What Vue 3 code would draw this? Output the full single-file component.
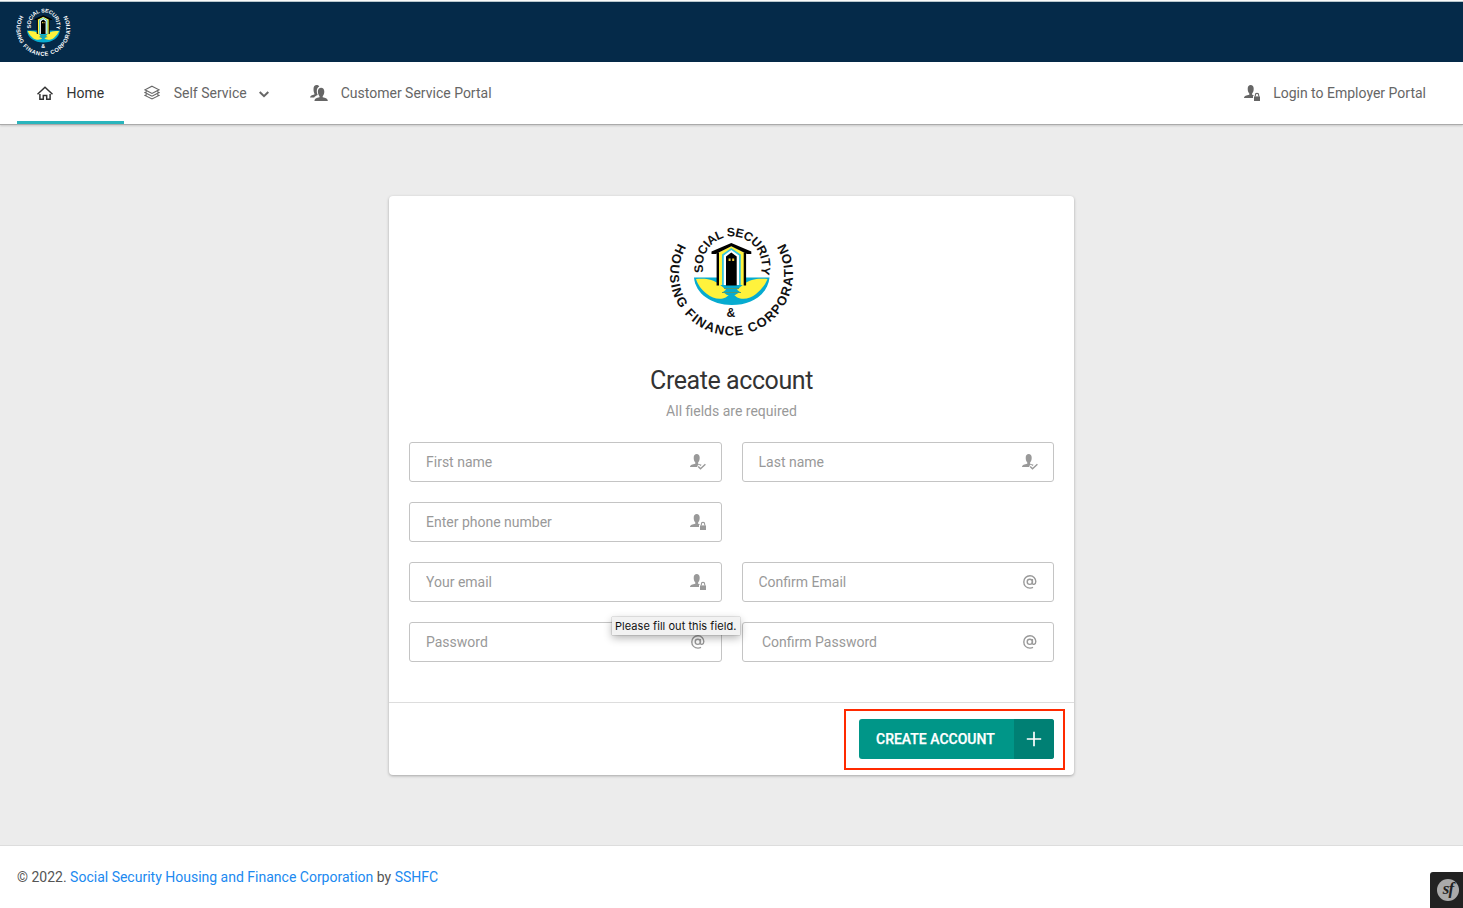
<script setup>
import { h } from 'vue'

const fields = [
  { id: 'first', label: 'First name', icon: 'check' },
  { id: 'last', label: 'Last name', icon: 'check' },
  { id: 'phone', label: 'Enter phone number', icon: 'lock', wide: true },
  { id: 'email', label: 'Your email', icon: 'lock' },
  { id: 'email2', label: 'Confirm Email', icon: 'at' },
  { id: 'pass', label: 'Password', icon: 'at' },
  { id: 'pass2', label: 'Confirm Password', icon: 'at', indent: true },
]

const bust = 'M0 13.1C0 11 2.6 10.2 5.3 9.7V8.4C4.2 7.4 3.7 5.7 3.7 3.7C3.7 1.2 4.9 0 6.7 0S9.7 1.2 9.7 3.7C9.7 5.7 9.2 7.4 8.1 8.4V9.7'

const UserIcon = (props) =>
  h('svg', { viewBox: '0 0 16 16', width: 16, height: 16 },
    props.kind === 'check'
      ? [
          h('path', { fill: 'currentColor', d: bust + 'L11.6 10.7L10.6 12L8.8 10.5L7 12.2L7.8 13.1Z' }),
          h('path', { fill: 'none', stroke: 'currentColor', 'stroke-width': 1.4, d: 'M8.2 12.4L10.5 14.7L15.4 10.2' }),
        ]
      : [
          h('path', { fill: 'currentColor', d: bust + 'L10 10.2L9 11V13.1Z' }),
          h('path', { fill: 'currentColor', d: 'M10 11.4H16V16H10Z' }),
          h('path', { fill: 'none', stroke: 'currentColor', 'stroke-width': 1.1, d: 'M11.3 11.6V10.2A1.7 1.8 0 0 1 14.7 10.2V11.6' }),
        ])
UserIcon.props = ['kind']

const Logo = (props) => {
  const arc = (id, d) => h('path', { id: id + props.uid, d, fill: 'none' })
  const ring = (id, size, len, text) =>
    h('text', { 'font-family': 'Liberation Sans, Arial, sans-serif', 'font-weight': 700, 'font-size': size, fill: 'currentColor', textLength: len },
      [h('textPath', { href: '#' + id + props.uid, textLength: len }, text)])
  return h('svg', { viewBox: '0 0 145 130' }, [
    arc('outer', 'M18.2 28.2A61.5 61.5 0 1 0 124.8 28.2'),
    arc('inner', 'M43.5 57.5A29.5 29.5 0 1 1 101 57.5'),
    ring('outer', 13, 257, 'HOUSING FINANCE CORPORATION'),
    ring('inner', 12.3, 107.5, 'SOCIAL SECURITY'),
    h('path', { fill: '#06abd0', d: 'M34 62.6H109.5C108 79 92 90 71.7 90S35.5 79 34 62.6Z' }),
    h('path', { fill: '#fff23c', d: 'M36 64C45 63 53 64 59 69L70 78C66 86 54 85 47 79C41 74 38 70 36 64ZM107.5 64C98 63 90 64 84 69L73 78C77 86 89 85 96 79C102 74 105 70 107.5 64Z' }),
    h('path', { fill: '#fff23c', d: 'M58 38L71.3 31L85 38V70H58Z' }),
    h('path', { fill: '#38c6de', d: 'M62 70V39.5L71.3 33L80.8 39.5V70Z' }),
    h('path', { fill: '#fff', d: 'M63.8 70V40.5L71.3 35L79 40.5V70Z' }),
    h('path', { fill: '#000', d: 'M66 70.5V41.5L71.3 37.5L76.7 41.5V70.5ZM56.6 37.5H59V70.5H56.6ZM83.7 37.5H86.1V70.5H83.7Z' }),
    h('path', { fill: '#000', d: 'M51.5 36.5L71.3 28L91.3 36.5V39H87L71.3 31.2L55.8 39H51.5Z' }),
    h('path', { fill: '#f1cc41', d: 'M68.6 43.5H70.6V46H68.6ZM72.2 43.5H74.2V46H72.2Z' }),
    h('path', { fill: '#06abd0', d: 'M65 71H79L76 74L80 77L75 80H67L63 77L67 74Z' }),
    h('path', { fill: '#4f9b72', d: 'M64 73H79V74H64ZM62 77H81V78H62Z' }),
    h('text', { x: 71, y: 101.6, 'text-anchor': 'middle', 'font-family': 'Liberation Sans, Arial, sans-serif', 'font-weight': 700, 'font-size': 12.2, fill: 'currentColor' }, '&'),
  ])
}
Logo.props = ['uid']
</script>

<template>
  <div class="page">
    <header class="topbar"><Logo uid="a" class="brand" /></header>
    <nav class="nav">
      <a class="item active">
        <svg width="16" height="16" viewBox="0 0 16 16" fill="none" stroke="currentColor" stroke-width="1.5"><path d="M.5 9.2L8 2.2L15.5 9.2" /><path d="M2.9 9V14.3H6.3V10.6H9.7V14.3H13.1V9" /></svg>
        <span>Home</span>
      </a>
      <a class="item">
        <svg width="16" height="16" viewBox="0 0 16 16" fill="none" stroke="currentColor" stroke-width="1.1"><path d="M8 1.2L15 4.8L8 8.4L1 4.8Z" /><path d="M2.8 6.6L1 7.6L8 11.2L15 7.6L13.2 6.6M2.8 9.4L1 10.4L8 14L15 10.4L13.2 9.4" /></svg>
        <span>Self Service</span>
        <svg class="caret" width="10" height="7" viewBox="0 0 10 7" fill="none" stroke="currentColor" stroke-width="2"><path d="M.7 1L5 5.2L9.3 1" /></svg>
      </a>
      <a class="item">
        <svg class="group" width="18" height="16" viewBox="0 0 18 16" fill="currentColor"><path d="M0 12.6C0 10.8 2 10 4.4 9.5V8.6C3.9 7.6 3.5 6 3.5 4C3.5 1.4 4.7 0 6.7 0C7.9 0 8.8.5 9.3 1.5C7.6 2.3 6.8 3.7 6.8 6C6.8 7.7 7.2 9 7.8 10C5.8 10.7 4.7 11.6 4.2 12.6Z" /><path d="M4.5 16C4.5 13.6 6.8 12.8 9.5 12.3V11.2C8.6 10.2 7.9 8.6 7.9 6.6C7.9 4.1 9.1 2.8 11.1 2.8S14.3 4.1 14.3 6.6C14.3 8.6 13.6 10.2 12.7 11.2V12.3C15.4 12.8 17.8 13.6 17.8 16Z" /></svg>
        <span>Customer Service Portal</span>
      </a>
      <a class="item login"><UserIcon kind="lock" /><span>Login to Employer Portal</span></a>
    </nav>

    <main class="content">
      <form class="card">
        <div class="body">
          <Logo uid="b" class="emblem" />
          <h1>Create account</h1>
          <p class="hint">All fields are required</p>
          <div class="grid">
            <div v-for="f in fields" :key="f.id" class="cell" :class="{ wide: f.wide }">
              <div class="field">
                <input :class="{ indent: f.indent }" :placeholder="f.label" />
                <svg v-if="f.icon === 'at'" class="at" width="14" height="14" viewBox="0 0 14 14" fill="none" stroke="currentColor" stroke-width="1.4"><circle cx="6.8" cy="6.8" r="2.6" /><path d="M9.4 4V8C9.4 10.2 12.8 9.8 12.8 6.6C12.8 3.2 10.2.8 7 .8C3.4.8.8 3.5.8 7S3.4 13.1 7 13.1C8.2 13.1 9 12.9 10 12.4" /></svg>
                <UserIcon v-else :kind="f.icon" />
              </div>
            </div>
          </div>
          <div class="tooltip">Please fill out this field.</div>
        </div>
        <div class="actions">
          <button type="button">
            <span class="label">CREATE ACCOUNT</span>
            <span class="plus"><svg width="16" height="16" viewBox="0 0 16 16" stroke="#fff" stroke-width="1.7"><path d="M.8 8H15.2M8 .8V15.2" /></svg></span>
          </button>
          <div class="highlight"></div>
        </div>
      </form>
    </main>

    <footer class="footer">
      <span>© 2022. <a>Social Security Housing and Finance Corporation</a> by <a>SSHFC</a></span>
    </footer>
    <div class="toolbar"><span class="badge">sf</span></div>
  </div>
</template>

<style>
body { margin: 0; overflow: hidden; }
</style>

<style scoped>
.page { position: relative; display: flex; flex-direction: column; height: 908px; box-sizing: border-box; border-top: 1px solid #fafafa; background: #ececec; font-family: Roboto, sans-serif; font-size: 14px; line-height: 20px; color: #333; overflow: hidden; }
.topbar { height: 61px; box-sizing: border-box; border-top: 1px solid #b9c6cc; background: #052a49; color: #fff; flex: none; }
.brand { display: block; width: 63.5px; height: 57px; margin: 1px 0 0 12px; }
.nav { height: 62px; flex: none; display: flex; padding: 0 17px; background: #fff; border-bottom: 1px solid #aaa; box-shadow: 0 1px 2px rgba(0,0,0,.15); color: #666; }
.item { display: flex; align-items: center; box-sizing: border-box; padding: 3px 20px 3px; height: 62px; }
.item svg { margin-right: 13.5px; flex: none; }
.item.active { color: #333; border-bottom: 3px solid #2ab5bd; padding-bottom: 0; }
.item .caret { margin: 2px 1px 0 12px; }
.item .group { margin-right: 13px; }
.login { margin-left: auto; }
.caret { margin-right: 1px; }
.content { flex: 1; padding-top: 71px; }
.card { position: relative; width: 685px; height: 579px; margin: 0 auto; box-sizing: border-box; background: #fff; border-radius: 4px; box-shadow: 0 1px 3px rgba(0,0,0,.3); display: flex; flex-direction: column; }
.body { height: 507px; box-sizing: border-box; padding: 19px 20px 0; border-bottom: 1px solid #ddd; position: relative; }
.emblem { display: block; width: 145px; height: 130px; margin-left: 251px; color: #111; }
h1 { margin: 23px 0 0; font-size: 25px; line-height: 26px; font-weight: 400; text-align: center; letter-spacing: -.42px; }
.hint { margin: 7px 0 21px; text-align: center; color: #999; }
.grid { display: grid; grid-template-columns: 1fr 1fr; gap: 20px; }
.wide { grid-column: span 2; }
.wide .field { width: 312.5px; }
.field { height: 40px; display: flex; align-items: center; box-sizing: border-box; border: 1px solid #c4c4c4; border-radius: 3px; padding: 0 15px 0 16px; color: #999; }
input { flex: 1; min-width: 0; border: 0; padding: 0; outline: 0; background: none; font: inherit; }
input.indent { padding-left: 3.5px; }
input::placeholder { color: #999; opacity: 1; }
.at { margin-right: 1px; }
.tooltip { position: absolute; left: 223px; top: 421px; width: 128px; height: 18px; line-height: 18px; box-sizing: border-box; padding-left: 3px; background: #f2f2f2; box-shadow: 0 0 1px rgba(0,0,0,.5), 0 3px 8px rgba(0,0,0,.3); color: #111; font-family: Inter, sans-serif; font-size: 11px; letter-spacing: .05px; white-space: nowrap; }
.actions { position: relative; flex: 1; display: flex; justify-content: flex-end; padding: 16px 20px 0; }
button { display: flex; width: 195px; height: 40px; padding: 0; border: 0; border-radius: 3px; overflow: hidden; background: #009688; color: #fff; font: 500 14px/40px Roboto, sans-serif; -webkit-text-stroke: .25px #fff; }
.label { width: 155px; padding-left: 17px; box-sizing: border-box; text-align: left; white-space: nowrap; }
.plus { width: 40px; height: 40px; display: flex; align-items: center; justify-content: center; background: #008074; }
.highlight { position: absolute; left: 455px; top: 6px; width: 217px; height: 57px; border: 2px solid #ff2a00; }
.footer { height: 63px; flex: none; box-sizing: border-box; border-top: 1px solid #ddd; background: #fff; display: flex; align-items: center; padding: 0 17px; color: #555; }
.footer a { color: #2089f0; }
.toolbar { position: absolute; right: 0; bottom: 0; width: 33px; height: 36px; border-radius: 3px 0 0 0; background: #222; }
.badge { position: absolute; left: 7px; top: 7px; width: 22px; height: 22px; border-radius: 50%; background: #aaa; color: #222; font: italic 700 17px/20px "Liberation Serif", serif; text-align: center; letter-spacing: -1px; }
</style>
